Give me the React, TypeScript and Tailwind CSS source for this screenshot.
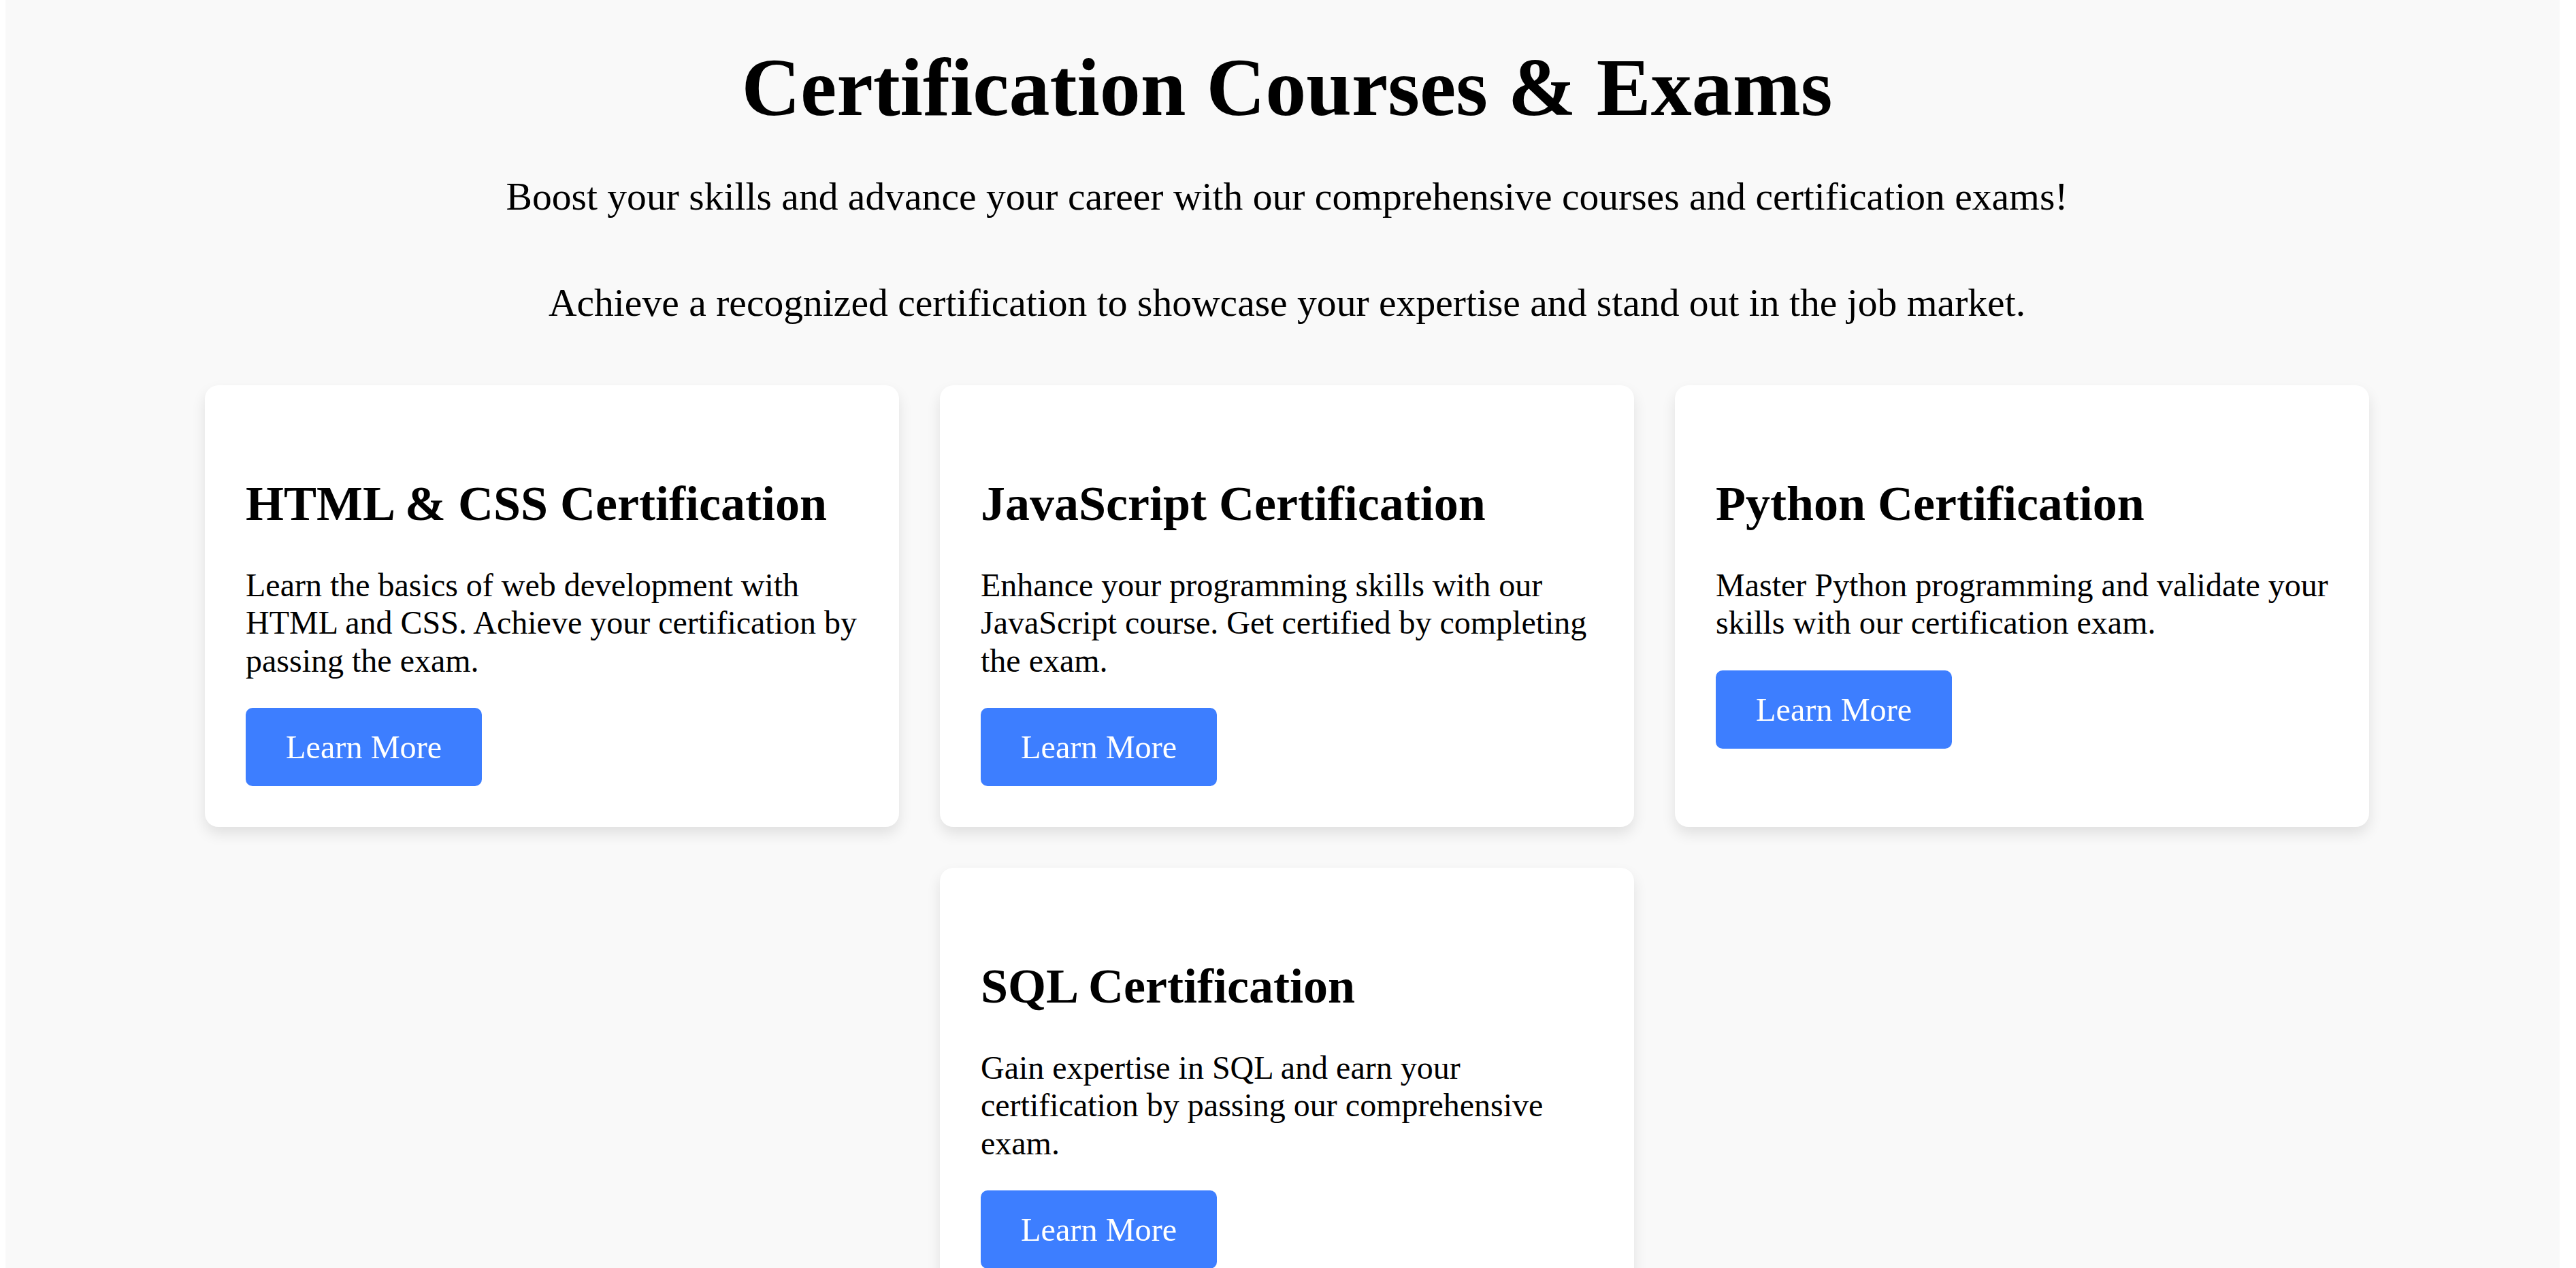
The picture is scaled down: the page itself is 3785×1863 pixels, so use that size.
const courses = [
  {
    title: "HTML & CSS Certification",
    text: "Learn the basics of web development with HTML and CSS. Achieve your certification by passing the exam.",
  },
  {
    title: "JavaScript Certification",
    text: "Enhance your programming skills with our JavaScript course. Get certified by completing the exam.",
  },
  {
    title: "Python Certification",
    text: "Master Python programming and validate your skills with our certification exam.",
  },
  {
    title: "SQL Certification",
    text: "Gain expertise in SQL and earn your certification by passing our comprehensive exam.",
  },
];

function CourseCard({ title, text }: { title: string; text: string }) {
  return (
    <div className="w-[1020px] bg-white rounded-[20px] shadow-[0_10px_20px_rgba(0,0,0,0.1)] pl-[60px] pr-[56px] pt-[133px] pb-[60px]">
      <h2 className="text-[72px] leading-[1.15] font-bold mb-[50px]">{title}</h2>
      <p className="text-[48px] leading-[1.15] mb-[42px]">{text}</p>
      <button className="bg-[#3d7eff] text-white text-[48.3px] leading-[1.15] px-[59px] py-[30px] rounded-[10px]">
        Learn More
      </button>
    </div>
  );
}

export default function App() {
  return (
    <div
      className="min-h-screen bg-white flex text-black"
      style={{ fontFamily: '"Liberation Serif", "Times New Roman", serif' }}
    >
      <div className="flex-1 ml-[8px] mr-[24px] bg-[#f9f9f9] pl-[13px]">
        <div className="flex flex-col items-center text-center pt-[60px]">
          <h1 className="text-[120px] leading-[1.15] font-bold">Certification Courses &amp; Exams</h1>
          <p className="text-[57.6px] leading-[1.15] mt-[58px]">
            Boost your skills and advance your career with our comprehensive courses and certification exams!
          </p>
          <p className="text-[57.6px] leading-[1.15] mt-[90px]">
            Achieve a recognized certification to showcase your expertise and stand out in the job market.
          </p>
        </div>
        <div className="flex flex-wrap justify-center gap-[60px] mt-[88px] pb-[60px]">
          {courses.map((c) => (
            <CourseCard key={c.title} title={c.title} text={c.text} />
          ))}
        </div>
      </div>
    </div>
  );
}
